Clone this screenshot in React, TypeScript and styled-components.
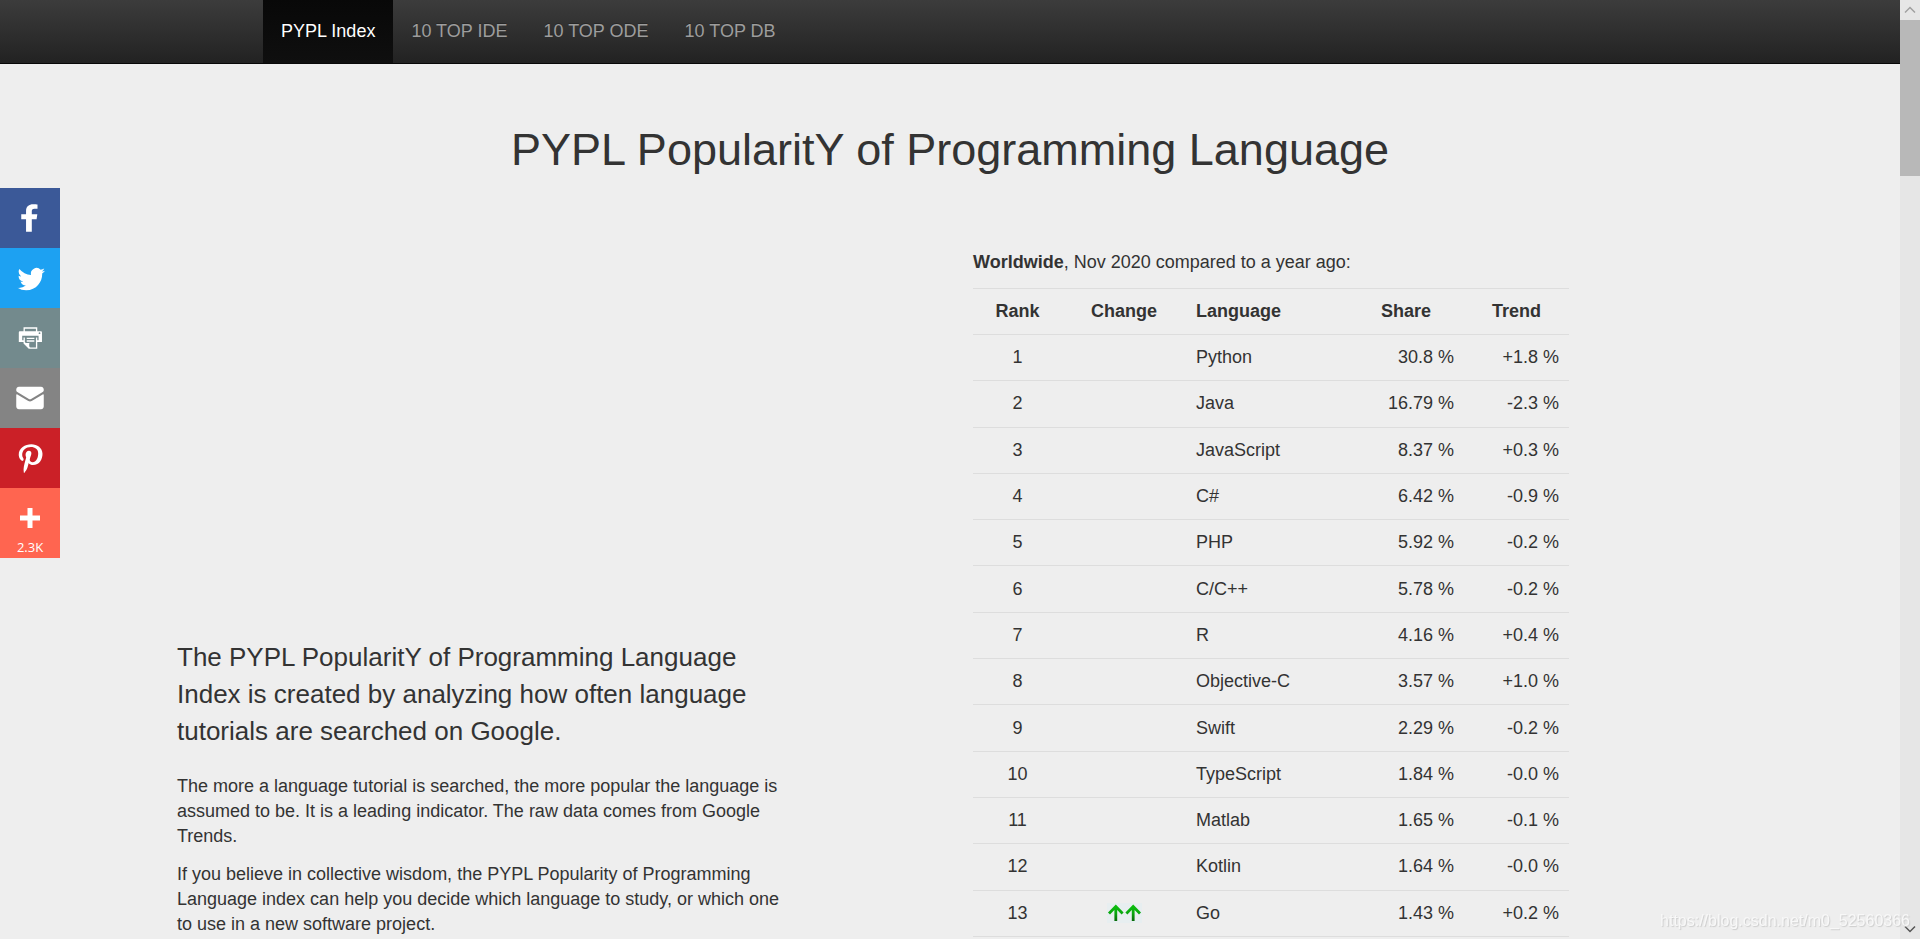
import React from "react";
import styled, { createGlobalStyle, css } from "styled-components";

const GlobalStyle = createGlobalStyle`
  *, *::before, *::after { box-sizing: border-box; }
  body {
    margin: 0;
    background: #eee;
    color: #333;
    font-family: "Liberation Sans", Arial, sans-serif;
    font-size: 18px;
    line-height: 25px;
  }
`;

const Shell = styled.div`
  display: flex;
  height: 100vh;
  overflow: hidden;
`;

const Page = styled.div`
  flex: 1;
  min-width: 0;
  overflow: hidden;
`;

const NavBar = styled.nav`
  display: flex;
  padding-left: 263px;
  background: linear-gradient(to bottom, #3c3c3c 0%, #222 100%);
  border-bottom: 1px solid #080808;
`;

const NavLink = styled.a<{ $active?: boolean }>`
  padding: 19px 18px;
  color: #9d9d9d;
  text-decoration: none;
  text-shadow: 0 -1px 0 rgba(0, 0, 0, 0.25);
  ${(p) =>
    p.$active &&
    css`
      color: #fff;
      background: linear-gradient(to bottom, #080808 0%, #0f0f0f 100%);
    `}
`;

const Title = styled.h1`
  margin: 61px 0 75px;
  font-size: 45px;
  font-weight: 400;
  line-height: 50px;
  text-align: center;
`;

const Columns = styled.main`
  display: grid;
  grid-template-columns: 612fr 596fr;
  gap: 184px;
  padding: 0 331px 0 177px;
`;

const Column = styled.section`
  min-width: 0;
`;

const MediaSlot = styled.div`
  height: 389px;
`;

const Lead = styled.p`
  margin: 0 0 24px;
  font-size: 26px;
  line-height: 37px;
`;

const Paragraph = styled.p`
  margin: 0 0 13px;
`;

const RankTable = styled.table`
  width: 100%;
  height: 649px;
  table-layout: fixed;
  border-collapse: collapse;
`;

type Align = "left" | "center" | "right";

const HeadCell = styled.th<{ $align?: Align; $width: number }>`
  width: ${(p) => p.$width}px;
  padding: 10px;
  border-top: 1px solid #ddd;
  text-align: ${(p) => p.$align ?? "center"};
`;

const Cell = styled.td<{ $align?: Align }>`
  padding: 10px;
  border-top: 1px solid #ddd;
  text-align: ${(p) => p.$align ?? "left"};
`;

const TableBody = styled.tbody`
  border-bottom: 1px solid #ddd;
`;

const Arrows = styled.svg`
  display: block;
  margin: 0 auto;
  background: #e7eef0;
`;

const ShareBar = styled.aside`
  position: fixed;
  top: 188px;
  left: 0;
  width: 60px;
`;

const ShareLink = styled.a<{ $color: string; $counted: boolean }>`
  display: flex;
  flex-direction: column;
  align-items: center;
  padding: ${(p) => (p.$counted ? "10px 10px 0" : "10px")};
  background: ${(p) => p.$color};
  text-decoration: none;
`;

const ShareIcon = styled.svg`
  display: block;
  width: 40px;
  height: 40px;
  fill: #fff;
`;

const ShareCount = styled.span`
  height: 20px;
  color: #fff;
  font-family: "Open Sans", sans-serif;
  font-size: 13px;
  line-height: 18px;
`;

const ScrollTrack = styled.div`
  display: flex;
  flex-direction: column;
  width: 20px;
  background: #e6e6e6;
`;

const ScrollThumb = styled.div`
  height: 156px;
  background: #b8b8b8;
`;

const ScrollButton = styled.button<{ $end?: boolean }>`
  display: flex;
  align-items: center;
  justify-content: center;
  width: 20px;
  height: 20px;
  margin: ${(p) => (p.$end ? "auto 0 0" : "0")};
  padding: 0;
  border: 0;
  background: none;
  color: ${(p) => (p.$end ? "#555" : "#a0a0a0")};
`;

const Watermark = styled.div`
  position: fixed;
  right: 10px;
  bottom: 6px;
  color: #f8f8f8;
  font-size: 16px;
  text-shadow: 1px 1px 1px #ccc;
`;

const navItems = ["PYPL Index", "10 TOP IDE", "10 TOP ODE", "10 TOP DB"];

const rows: [string, string, string][] = [
  ["Python", "30.8 %", "+1.8 %"],
  ["Java", "16.79 %", "-2.3 %"],
  ["JavaScript", "8.37 %", "+0.3 %"],
  ["C#", "6.42 %", "-0.9 %"],
  ["PHP", "5.92 %", "-0.2 %"],
  ["C/C++", "5.78 %", "-0.2 %"],
  ["R", "4.16 %", "+0.4 %"],
  ["Objective-C", "3.57 %", "+1.0 %"],
  ["Swift", "2.29 %", "-0.2 %"],
  ["TypeScript", "1.84 %", "-0.0 %"],
  ["Matlab", "1.65 %", "-0.1 %"],
  ["Kotlin", "1.64 %", "-0.0 %"],
  ["Go", "1.43 %", "+0.2 %"],
];

const shares = [
  {
    label: "Facebook",
    color: "#3b5998",
    d: "M22 5.16c-.406-.054-1.806-.16-3.43-.16-3.4 0-5.733 1.825-5.733 5.17v2.882H9v3.913h3.837V27h4.604V16.965h3.823l.587-3.913h-4.41v-2.5c0-1.123.347-1.903 2.198-1.903H22V5.16z",
  },
  {
    label: "Twitter",
    color: "#1da1f2",
    d: "M27.996 10.116c-.81.36-1.68.602-2.592.71a4.526 4.526 0 0 0 1.984-2.496 9.037 9.037 0 0 1-2.866 1.095 4.513 4.513 0 0 0-7.69 4.116 12.81 12.81 0 0 1-9.3-4.715 4.49 4.49 0 0 0-.612 2.27 4.51 4.51 0 0 0 2.008 3.755 4.495 4.495 0 0 1-2.044-.564v.057a4.515 4.515 0 0 0 3.62 4.425 4.52 4.52 0 0 1-2.04.077 4.517 4.517 0 0 0 4.217 3.134 9.055 9.055 0 0 1-5.604 1.93A9.18 9.18 0 0 1 6 23.85a12.773 12.773 0 0 0 6.918 2.027c8.3 0 12.84-6.876 12.84-12.84 0-.195-.005-.39-.014-.583a9.172 9.172 0 0 0 2.252-2.336",
  },
  {
    label: "Print",
    color: "#738a8d",
    d: "M24.67 10.62h-2.86V7.49H10.82v3.12H7.95c-.5 0-.9.4-.9.9v7.66h3.77v1.31L15 24.66h6.81v-5.44h3.77v-7.7c-.01-.5-.41-.9-.91-.9zM11.88 8.56h8.86v2.06h-8.86V8.56zm10.98 9.18h-1.05v-2.1h-1.06v7.96H16.4c-1.58 0-.82-3.74-.82-3.74s-3.65.89-3.69-.78v-3.43h-1.06v2.06H9.77v-3.58h13.09v3.61zm.75-4.91c-.4 0-.72-.32-.72-.72 0-.4.32-.72.72-.72.4 0 .72.32.72.72 0 .4-.32.72-.72.72zm-4.12 2.96h-6.1v1.06h6.1v-1.06zm-6.11 3.15h6.1v-1.06h-6.1v1.06z",
  },
  {
    label: "Email",
    color: "#848484",
    d: "M27 22.757c0 1.24-.988 2.243-2.19 2.243H7.19C5.98 25 5 23.994 5 22.757V13.67c0-.556.39-.773.855-.496l8.78 5.238c.782.467 1.95.467 2.73 0l8.78-5.238c.472-.28.855-.063.855.495v9.087zM27 9.243C27 8.006 26.02 7 24.81 7H7.19C5.988 7 5 8.004 5 9.243v.465c0 .554.385 1.232.857 1.514l9.61 5.733c.267.16.8.16 1.067 0l9.61-5.733c.473-.283.856-.96.856-1.514v-.465z",
  },
  {
    label: "Pinterest",
    color: "#cb2027",
    d: "M7 13.252c0 1.81.772 4.45 2.895 5.045.074.014.178.04.252.04.49 0 .772-1.27.772-1.63 0-.428-1.174-1.34-1.174-3.123 0-3.705 3.028-6.33 6.947-6.33 3.37 0 5.863 1.782 5.863 5.058 0 2.446-1.054 7.035-4.468 7.035-1.232 0-2.286-.83-2.286-2.018 0-1.742 1.307-3.43 1.307-5.225 0-1.092-.67-1.977-1.916-1.977-1.692 0-2.732 1.77-2.732 3.165 0 .774.104 1.63.476 2.336-.683 2.736-2.08 6.814-2.08 9.633 0 .87.135 1.728.224 2.6l.134.137.207-.07c2.494-3.178 2.405-3.8 3.533-7.96.61 1.077 2.182 1.658 3.43 1.658 5.254 0 7.614-4.77 7.614-9.067C26 7.987 21.755 5 17.094 5 12.017 5 7 8.15 7 13.252z",
  },
  {
    label: "More",
    color: "#ff6550",
    count: "2.3K",
    d: "M18 14V8h-4v6H8v4h6v6h4v-6h6v-4h-6z",
  },
];

function RisingArrows() {
  return (
    <Arrows width="35" height="20" viewBox="0 0 35 20" role="img" aria-label="Up two places">
      <defs>
        <linearGradient id="rise" gradientUnits="userSpaceOnUse" x1="0" y1="2" x2="0" y2="18">
          <stop offset="0" stopColor="#0cc00c" />
          <stop offset="0.5" stopColor="#0aa80f" />
          <stop offset="1" stopColor="#086808" />
        </linearGradient>
      </defs>
      <g fill="none" stroke="url(#rise)" strokeWidth="2.8">
        <path d="M2 10.4L8.8 3.4L15.6 10.4M8.8 3V18" />
        <path d="M19.4 10.4L26.2 3.4L33 10.4M26.2 3V18" />
      </g>
    </Arrows>
  );
}

export default function App() {
  return (
    <>
      <GlobalStyle />
      <Shell>
        <Page>
          <NavBar>
            {navItems.map((item, i) => (
              <NavLink key={item} href="#" $active={i === 0}>
                {item}
              </NavLink>
            ))}
          </NavBar>
          <Title>PYPL PopularitY of Programming Language</Title>
          <Columns>
            <Column>
              <MediaSlot />
              <Lead>
                The PYPL PopularitY of Programming Language Index is created by analyzing how
                often language tutorials are searched on Google.
              </Lead>
              <Paragraph>
                The more a language tutorial is searched, the more popular the language is assumed
                to be. It is a leading indicator. The raw data comes from Google Trends.
              </Paragraph>
              <Paragraph>
                If you believe in collective wisdom, the PYPL Popularity of Programming Language
                index can help you decide which language to study, or which one to use in a new
                software project.
              </Paragraph>
            </Column>
            <Column>
              <Paragraph>
                <b>Worldwide</b>, Nov 2020 compared to a year ago:
              </Paragraph>
              <RankTable>
                <thead>
                  <tr>
                    <HeadCell $width={89}>Rank</HeadCell>
                    <HeadCell $width={124}>Change</HeadCell>
                    <HeadCell $width={162} $align="left">
                      Language
                    </HeadCell>
                    <HeadCell $width={116}>Share</HeadCell>
                    <HeadCell $width={105}>Trend</HeadCell>
                  </tr>
                </thead>
                <TableBody>
                  {rows.map(([language, share, trend], i) => (
                    <tr key={language}>
                      <Cell $align="center">{i + 1}</Cell>
                      <Cell $align="center">{language === "Go" && <RisingArrows />}</Cell>
                      <Cell>{language}</Cell>
                      <Cell $align="right">{share}</Cell>
                      <Cell $align="right">{trend}</Cell>
                    </tr>
                  ))}
                </TableBody>
              </RankTable>
            </Column>
          </Columns>
        </Page>
        <ScrollTrack>
          <ScrollButton type="button" aria-label="Scroll up">
            <svg width="12" height="8" viewBox="0 0 12 8" fill="none" stroke="currentColor" strokeWidth="1.5">
              <path d="M1 6.5L6 1.5L11 6.5" />
            </svg>
          </ScrollButton>
          <ScrollThumb />
          <ScrollButton type="button" aria-label="Scroll down" $end>
            <svg width="12" height="8" viewBox="0 0 12 8" fill="none" stroke="currentColor" strokeWidth="1.5">
              <path d="M1 1.5L6 6.5L11 1.5" />
            </svg>
          </ScrollButton>
        </ScrollTrack>
      </Shell>
      <ShareBar aria-label="Share">
        {shares.map((s) => (
          <ShareLink
            key={s.label}
            href="#"
            aria-label={s.label}
            $color={s.color}
            $counted={Boolean(s.count)}
          >
            <ShareIcon viewBox="0 0 32 32" aria-hidden="true">
              <path d={s.d} />
            </ShareIcon>
            {s.count && <ShareCount>{s.count}</ShareCount>}
          </ShareLink>
        ))}
      </ShareBar>
      <Watermark>https://blog.csdn.net/m0_52560366</Watermark>
    </>
  );
}
